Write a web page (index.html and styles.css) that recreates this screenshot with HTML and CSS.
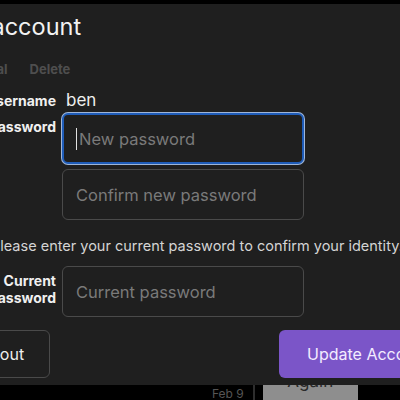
FILE: index.html
```html
<!DOCTYPE html>
<html>
<head>
<meta charset="utf-8">
<link rel="stylesheet" href="styles.css">
</head>
<body>
<div class="panel">
  <h1 class="title">Edit account</h1>
  <div class="tabs">
    <span class="tab">General</span>
    <span class="tab">Delete</span>
  </div>
  <div class="form">
    <div class="label username-label">Username</div>
    <div class="value">ben</div>

    <div class="label pw-label">Password</div>
    <div class="inputs">
      <div class="input focused"><span class="caret"></span>New password</div>
      <div class="input">Confirm new password</div>
    </div>
  </div>
  <p class="info">Please enter your current password to confirm your identity.</p>
  <div class="form current-row">
    <div class="label cur-label">Current<br>Password</div>
    <div class="input">Current password</div>
  </div>
  <div class="actions">
    <button class="btn btn-outline">Log out</button>
    <button class="btn btn-primary">Update Account</button>
  </div>
</div>
<div class="under">
  <span class="date">Feb 9</span>
  <span class="divider"></span>
  <span class="again"><span class="again-text">Again</span></span>
</div>
</body>
</html>
```

FILE: styles.css
```css
html, body {
  margin: 0;
  padding: 0;
  background: #000;
  overflow: hidden;
  width: 400px;
  height: 400px;
  font-family: Inter, "Noto Sans", sans-serif;
}

.panel {
  margin-top: 4px;
  margin-left: -73px;
  width: 620px;
  height: 381px;
  box-sizing: border-box;
  padding: 7px 24px 7px 24px;
  background: #1f1f1f;
  display: flex;
  flex-direction: column;
}

.title {
  margin: 0 0 0 -8px;
  font-size: 23.5px;
  line-height: 32px;
  font-weight: 400;
  color: #f2f2f2;
}

.tabs {
  margin-top: 18px;
  margin-left: 7px;
  display: flex;
  gap: 22px;
  height: 16px;
  line-height: 16px;
  font-size: 13px;
  font-weight: 700;
  color: #4e4e4e;
}

.form {
  display: grid;
  grid-template-columns: 105px 242px;
  column-gap: 6px;
  margin-top: 11px;
}

.label {
  text-align: right;
  font-size: 14px;
  font-weight: 700;
  color: #f0f0f0;
  line-height: 16px;
}

.username-label {
  align-self: center;
}

.value {
  height: 24px;
  line-height: 24px;
  font-size: 17px;
  color: #eeeeee;
  margin-bottom: 1px;
  padding-left: 4px;
}

.pw-label {
  padding-top: 6px;
}

.inputs {
  display: flex;
  flex-direction: column;
  gap: 5px;
}

.input {
  box-sizing: border-box;
  height: 51px;
  border: 1px solid #4a4a4a;
  border-radius: 6px;
  padding: 0 13px;
  display: flex;
  align-items: center;
  font-size: 16.5px;
  color: #7a7a7a;
  background: #1f1f1f;
}

.input.focused {
  border: 2px solid #1f5cb8;
  padding-left: 12px;
  box-shadow: 0 0 0 1px #9fb6d8;
}

.caret {
  display: inline-block;
  width: 1px;
  height: 22px;
  background: #e0e0e0;
  margin-right: 2px;
}

.info {
  margin: 16px 0 0 40px;
  font-size: 14.5px;
  line-height: 20px;
  color: #d4d4d4;
  white-space: nowrap;
}

.current-row {
  margin-top: 10px;
}

.cur-label {
  align-self: center;
  line-height: 17px;
  margin-bottom: 6px;
}

.actions {
  margin-top: 13px;
  display: flex;
  width: 560px;
}

.btn {
  flex-shrink: 0;
  height: 48px;
  border-radius: 6px;
  font-family: Inter, "Noto Sans", sans-serif;
  font-size: 16px;
}

.btn-outline {
  width: 99px;
  background: transparent;
  border: 1px solid #4a4a4a;
  color: #eeeeee;
  padding: 0 10px 0 0;
}

.btn-primary {
  margin-left: 229px;
  width: 200px;
  border: none;
  background: #7b55c8;
  color: #f3ecff;
  text-align: left;
  padding-left: 28px;
}

.under {
  height: 15px;
  display: flex;
  align-items: stretch;
  padding-left: 212px;
  overflow: hidden;
}

.date {
  font-size: 12px;
  color: #555;
  line-height: 15px;
  margin-top: 1px;
}

.divider {
  width: 2px;
  background: #2e2e2e;
  margin-left: 9px;
}

.again {
  margin-left: 8px;
  width: 95px;
  background: #8e8e8e;
  display: flex;
  justify-content: center;
  overflow: hidden;
}

.again-text {
  font-size: 17px;
  color: #2a2a2a;
  line-height: 20px;
  margin-top: -14px;
}
```
